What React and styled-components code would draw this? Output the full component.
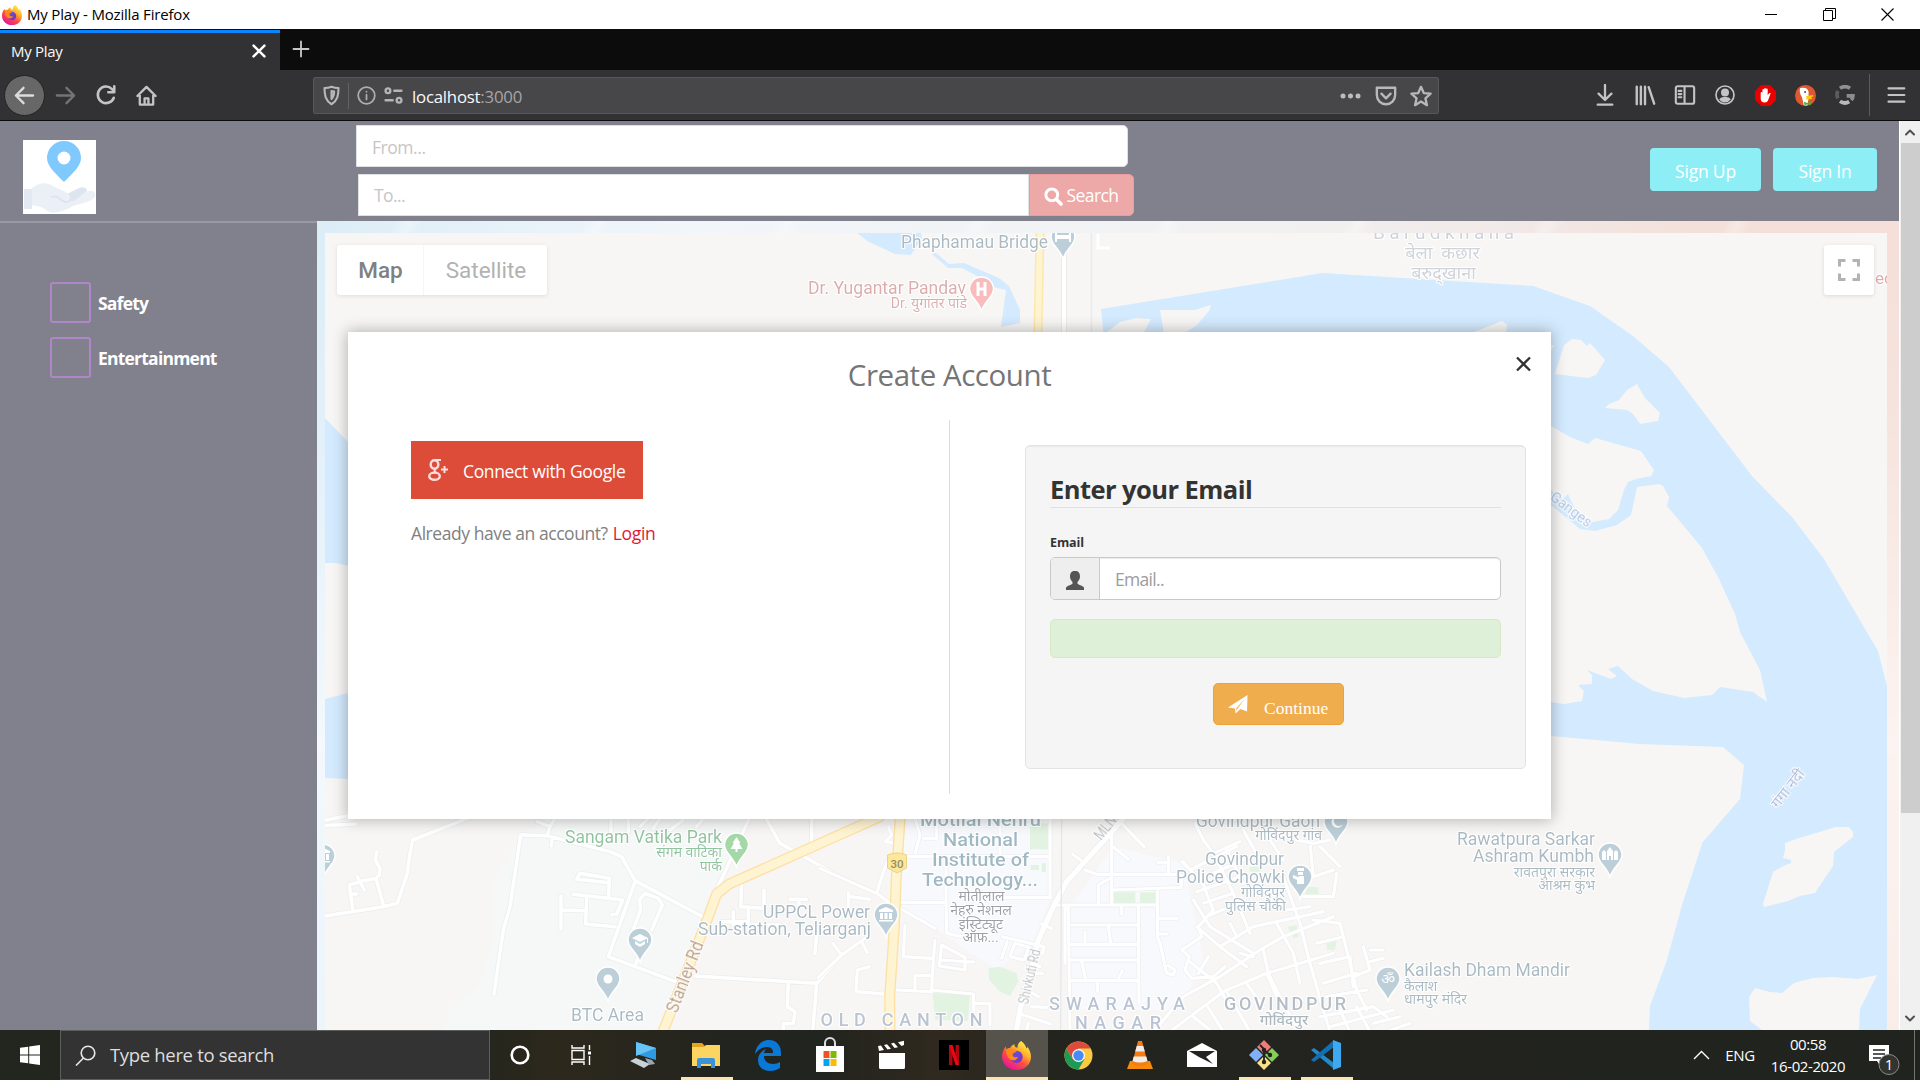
import React from "react";
import styled, { createGlobalStyle, css } from "styled-components";

const UI = `"Open Sans", "Noto Sans", sans-serif`;

const GlobalStyle = createGlobalStyle`
  *, *::before, *::after { box-sizing: border-box; }
  body { margin: 0; background: #fff; overflow: hidden; }
  button, input { font: inherit; margin: 0; }
  svg { display: block; flex: none; }
`;

const Desktop = styled.div`
  width: 1920px;
  height: 1080px;
  display: flex;
  flex-direction: column;
  font-family: ${UI};
  overflow: hidden;
`;

const Label = styled.span`
  font-size: ${(p) => p.$size || 15}px;
  letter-spacing: ${(p) => p.$track || 0}px;
  font-weight: ${(p) => p.$weight || 400};
  color: ${(p) => p.$color || "inherit"};
  line-height: 1;
  white-space: pre;
`;

/* ---------- window chrome ---------- */

const TitleBar = styled.header`
  height: 29px;
  flex: none;
  background: #fff;
  color: #000;
  display: flex;
  align-items: center;
  padding-left: 2px;
  gap: 5px;
`;

const WindowControls = styled.div`
  margin-left: auto;
  margin-right: 3px;
  display: flex;
  height: 100%;
`;

const WindowControl = styled.span`
  width: 58.5px;
  display: flex;
  align-items: center;
  justify-content: center;
`;

const TabStrip = styled.div`
  height: 41px;
  flex: none;
  background: #0c0c0d;
  display: flex;
  padding-top: 1px;
`;

const Tab = styled.div`
  width: 280px;
  border-top: 3px solid #0a84ff;
  background: #323234;
  color: #f9f9fa;
  display: flex;
  align-items: center;
  justify-content: space-between;
  padding: 0 14px 1px 11px;
`;

const NewTab = styled.div`
  width: 42px;
  display: flex;
  align-items: center;
  justify-content: center;
  padding-bottom: 2px;
`;

const Toolbar = styled.div`
  height: 51px;
  flex: none;
  background: #323234;
  border-bottom: 1px solid #0c0c0d;
  display: flex;
  align-items: center;
`;

const NavButtons = styled.div`
  width: 313px;
  display: flex;
  align-items: center;
  padding-left: 4px;
`;

const ToolSlot = styled.span`
  width: ${(p) => p.$w || 40}px;
  display: flex;
  justify-content: center;
  align-items: center;
`;

const BackButton = styled(ToolSlot)`
  height: 41px;
  width: 41px;
  border-radius: 50%;
  background: #676768;
  border: 1px solid #232324;
`;

const UrlBar = styled.div`
  width: 1126px;
  height: 37px;
  margin-top: 1px;
  background: #474749;
  border: 1px solid #58585a;
  border-radius: 2px;
  display: flex;
  align-items: center;
`;

const UrlDivider = styled.span`
  width: 1px;
  height: 26px;
  background: #626264;
`;

const UrlText = styled.div`
  flex: 1;
  padding: 2px 0 0 10px;
  color: #f9f9fa;
`;

const ToolbarEnd = styled.div`
  margin-left: auto;
  display: flex;
  align-items: center;
`;

const ToolbarDivider = styled.span`
  width: 1px;
  height: 42px;
  margin: 0 2px 0 4px;
  background: #5b5b5d;
`;

/* ---------- page ---------- */

const Viewport = styled.main`
  height: 909px;
  flex: none;
  display: flex;
  position: relative;
`;

const Page = styled.div`
  width: 1899px;
  display: flex;
  flex-direction: column;
`;

const SiteHeader = styled.div`
  height: 100px;
  flex: none;
  background: #81808d;
  display: flex;
  align-items: flex-start;
  padding: 4px 22px 0 23px;
`;

const LogoTile = styled.div`
  margin-top: 15px;
  width: 73px;
  height: 74px;
  background: #fff;
`;

const SearchStack = styled.div`
  margin-left: 260px;
  display: flex;
  flex-direction: column;
  gap: 7px;
`;

const field = css`
  height: 42px;
  border: 1px solid #dfe0e4;
  background: #fff;
  color: #c6c6c6;
  display: flex;
  align-items: center;
`;

const FromField = styled.div`
  ${field}
  width: 772px;
  padding-left: 15px;
  padding-top: 4px;
  border-radius: 0 5px 5px 0;
`;

const ToRow = styled.div`
  display: flex;
  padding-left: 2px;
`;

const ToField = styled.div`
  ${field}
  width: 671px;
  padding-left: 15px;
  padding-top: 2px;
`;

const SearchButton = styled.button`
  width: 105px;
  height: 42px;
  border: 1px solid #eb9c9c;
  border-radius: 0 5px 5px 0;
  background: #eda8a8;
  color: #fff;
  display: flex;
  align-items: center;
  justify-content: center;
  gap: 4px;
  padding: 2px 1px 0 0;
`;

const AuthButtons = styled.div`
  margin-left: auto;
  margin-top: 23px;
  display: flex;
  gap: 12px;
`;

const AuthButton = styled.button`
  width: ${(p) => p.$w}px;
  height: 43px;
  border: 0;
  border-radius: 4px;
  background: #8eeef6;
  color: #fff;
  padding: 4px 0 0;
`;

const Body = styled.div`
  flex: 1;
  display: flex;
  min-height: 0;
`;

const Sidebar = styled.aside`
  width: 317px;
  background: #81808d;
  border-top: 2px solid #9a98a7;
  padding: 59px 0 0 50px;
  display: flex;
  flex-direction: column;
  gap: 14px;
`;

const CheckRow = styled.label`
  display: flex;
  align-items: center;
  gap: 7px;
  color: #fff;
`;

const CheckBox = styled.span`
  width: 41px;
  height: 41px;
  border: 2px solid #b186c9;
  border-radius: 3px;
`;

const CheckText = styled(Label)`
  padding-top: 2px;
`;

const MapFrame = styled.section`
  flex: 1;
  padding: 12px 12px 0 8px;
  background:
    linear-gradient(115deg, rgba(255,255,255,0) 40%, rgba(255,255,255,.3) 47%, rgba(255,255,255,0) 55%) 0 0 / 190px 12px repeat-x,
    linear-gradient(180deg, rgba(255,255,255,0) 0, rgba(255,255,255,.15) 200px, rgba(255,255,255,.65) 520px, rgba(255,255,255,.45) 100%),
    linear-gradient(90deg, #dcedf7 0, #f1f6fa 24%, #f1f1f2 60%, #f1e9e7 76%, #f4dfd9 88%, #f5dfd8 100%);
  display: flex;
`;

const MapCanvas = styled.div`
  flex: 1;
  position: relative;
  overflow: hidden;
  background: #f7f6f5;
`;

const MapTypeControl = styled.div`
  position: absolute;
  left: 12px;
  top: 12px;
  height: 50px;
  width: 210px;
  display: flex;
  background: #fff;
  border-radius: 3px;
  box-shadow: 0 1px 4px rgba(0, 0, 0, 0.1);
  font-family: Roboto, sans-serif;
`;

const MapType = styled.div`
  width: ${(p) => p.$w}px;
  display: flex;
  align-items: center;
  justify-content: center;
  padding-left: 1px;
  & + & { border-left: 1px solid #f5f5f5; }
`;

const FullscreenControl = styled.div`
  position: absolute;
  right: 13px;
  top: 12px;
  width: 50px;
  height: 50px;
  background: #fff;
  border-radius: 3px;
  box-shadow: 0 1px 4px rgba(0, 0, 0, 0.12);
  display: flex;
  align-items: center;
  justify-content: center;
`;

const MapText = styled.text`
  filter: url(#labelHalo);
  white-space: pre;
`;

const Scrollbar = styled.div`
  width: 21px;
  background: #f0f0f0;
  border-left: 1px solid #fff;
  display: flex;
  flex-direction: column;
  align-items: center;
`;

const ScrollArrow = styled.div`
  height: 22px;
  display: flex;
  align-items: center;
`;

const ScrollThumb = styled.div`
  width: 19px;
  height: 670px;
  margin-bottom: auto;
  background: #cdcdcd;
`;

/* ---------- modal ---------- */

const Modal = styled.div`
  position: absolute;
  left: 348px;
  top: 211px;
  width: 1203px;
  height: 487px;
  background: #fff;
  box-shadow: 0 0 14px 1px rgba(0, 0, 0, 0.28);
  display: flex;
  flex-direction: column;
  padding: 24px 25px 25px 0;
`;

const ModalHeader = styled.div`
  display: grid;
  grid-template-columns: 1fr auto 1fr;
  align-items: start;
  height: 64px;
  padding-left: 25px;
`;

const ModalTitle = styled.h2`
  grid-column: 2;
  margin: 4px 0 0;
  display: flex;
`;

const CloseButton = styled.span`
  justify-self: end;
  margin-right: -5px;
`;

const ModalBody = styled.div`
  flex: 1;
  display: flex;
`;

const SocialColumn = styled.div`
  width: 602px;
  border-right: 1px solid #dcdcdc;
  padding: 21px 0 0 63px;
  display: flex;
  flex-direction: column;
  align-items: flex-start;
`;

const GoogleButton = styled.button`
  width: 232px;
  height: 58px;
  border: 0;
  background: #dd4b39;
  color: #fff;
  display: flex;
  align-items: center;
  gap: 15px;
  padding: 0 0 0 17px;
`;

const GoogleText = styled(Label)`
  padding-top: 4px;
`;

const LoginLine = styled.p`
  margin: 26px 0 0;
  display: flex;
  gap: 5px;
`;

const FormWell = styled.form`
  margin: 25px 0 25px 75px;
  width: 501px;
  border: 1px solid #e3e3e3;
  border-radius: 5px;
  background: #f5f5f5;
  box-shadow: inset 0 1px 1px rgba(0, 0, 0, 0.05);
  padding: 29px 24px 0;
  display: flex;
  flex-direction: column;
`;

const Legend = styled.div`
  height: 33px;
  border-bottom: 1px solid #e0e0e0;
  display: flex;
  align-items: center;
  color: #333;
  padding-bottom: 2px;
`;

const FieldLabel = styled.label`
  margin-top: 27px;
  height: 22px;
  color: #333;
  display: flex;
  align-items: center;
  padding-bottom: 6px;
`;

const InputGroup = styled.div`
  height: 43px;
  border: 1px solid #c9c9c9;
  border-radius: 5px;
  background: #fff;
  display: flex;
  overflow: hidden;
  box-shadow: inset 0 1px 1px rgba(0, 0, 0, 0.075);
`;

const Addon = styled.span`
  width: 49px;
  border-right: 1px solid #c9c9c9;
  background: #eee;
  display: flex;
  align-items: center;
  justify-content: center;
  padding-top: 3px;
`;

const InputText = styled.span`
  padding-left: 15px;
  padding-top: 3px;
  display: flex;
  align-items: center;
  color: #9c9c9c;
`;

const Alert = styled.div`
  margin-top: 19px;
  height: 39px;
  border: 1px solid #d6e9c6;
  border-radius: 5px;
  background: #dff0d8;
`;

const ContinueButton = styled.button`
  margin: 25px 0 0 163px;
  width: 131px;
  height: 42px;
  border: 1px solid #eea236;
  border-radius: 5px;
  background: #f0ad4e;
  color: #fff;
  font-family: "Liberation Serif", serif;
  display: flex;
  align-items: center;
  padding: 0 0 0 14px;
  gap: 16px;
`;

const ContinueText = styled(Label)`
  padding-top: 10px;
`;

/* ---------- taskbar ---------- */

const Taskbar = styled.footer`
  height: 50px;
  flex: none;
  display: flex;
  background: linear-gradient(90deg, #23261f 0, #24261e 25%, #2d281c 29%, #22241f 38%, #22241f 43%, #30291e 49%, #23241e 55%, #21231e 100%);
  color: #fff;
`;

const StartButton = styled.div`
  width: 60px;
  display: flex;
  align-items: center;
  justify-content: center;
`;

const TaskSearch = styled.div`
  width: 430px;
  height: 50px;
  border: 1px solid #5d5d5d;
  background: #333;
  color: #dedede;
  display: flex;
  align-items: center;
  padding-left: 14px;
  gap: 14px;
`;

const TaskItem = styled.div`
  width: 62px;
  padding-right: 2px;
  display: flex;
  align-items: center;
  justify-content: center;
  background: ${(p) => (p.$active ? "#56524c" : "transparent")};
  box-shadow: ${(p) => (p.$active ? "inset 0 -3px #fce4ac" : "none")};
`;

const RunningItem = styled(TaskItem)`
  width: 52px;
  margin: 0 5px;
  box-shadow: inset 0 -3px #fce4ac;
`;

const Tray = styled.div`
  margin-left: auto;
  display: flex;
  align-items: center;
`;

const Clock = styled.div`
  width: 76px;
  margin: 0 23px 0 0;
  display: flex;
  flex-direction: column;
  align-items: center;
  gap: 7px;
`;

const ShowDesktop = styled.div`
  width: 6px;
  height: 50px;
  border-left: 1px solid #75766f;
`;

/* ---------- drawings ---------- */

const FirefoxLogo = ({ size, id }) => (
  <svg width={size} height={size} viewBox="0 0 32 32">
    <defs>
      <linearGradient id={`${id}a`} x1=".85" y1=".05" x2=".25" y2=".95">
        <stop offset="0" stopColor="#fff44f" />
        <stop offset=".35" stopColor="#ffb12c" />
        <stop offset=".62" stopColor="#ff4f3f" />
        <stop offset="1" stopColor="#e8159a" />
      </linearGradient>
      <linearGradient id={`${id}b`} x1="0" y1="0" x2="1" y2="1">
        <stop offset="0" stopColor="#5f5be0" />
        <stop offset="1" stopColor="#7e2bc4" />
      </linearGradient>
    </defs>
    <path fill={`url(#${id}a)`} d="M21 0c3 2 5 5 6 8 1 0 1-1 1-2 2 3 4 7 4 11 0 9-7 15-16 15S0 25.500 0 17c0-4 1.500-8 4-11l1 3c1-1 2-1.300 4-1.400C10 5.500 12 4.300 14 3.600 13.500 5 14 6 15 7l2 .4C17 4 18.500 1.500 21 0z" />
    <circle cx="16" cy="17.500" r="6.800" fill={`url(#${id}b)`} />
    <path fill="#ff8a16" d="M5 9c3-1 6-.5 8 1l3 .5c0 1.500-1 2.200-3 2.800-1 .4-1.500 1.700-1.200 2.700.7 2 3 2.500 6 1.500-1 3-4 4.500-7 3.500C6 19.500 4 14 5 9z" />
  </svg>
);

const Line = ({ w = 24, h, d, color = "#c4c4c5", sw = 2.400, box = "0 0 24 24", fill = "none" }) => (
  <svg width={w} height={h || w} viewBox={box} fill={fill} stroke={color} strokeWidth={sw} strokeLinecap="round" strokeLinejoin="round">
    <path d={d} />
  </svg>
);

const LogoArt = () => (
  <svg width="73" height="74" viewBox="0 0 73 74">
    <path fill="#7fc9ff" fillRule="evenodd" d="M41 1a17 17 0 0 1 17 17c0 8-8 15-17 24-9-9-17-16-17-24A17 17 0 0 1 41 1zm0 10.500a6.500 6.500 0 1 0 0 13 6.500 6.500 0 0 0 0-13z" />
    <path fill="#e3e9f2" d="M1 49h8v20H1z" />
    <path fill="#dfe5ef" d="M42 55l14-7c4-2 8 0 8 3l-12 10-10 2z" />
    <path fill="#ebf0f7" d="M9 48c5-4 12-6 17-4l10 5c5 2 10 4 11 8 0 3-2 5-4 6l8-2 12-9c4-2 8-2 9 2 1 4-3 6-8 8L50 66c-8 5-18 8-24 6l-8-5-9-2z" />
    <path fill="none" stroke="#dfe5ee" strokeWidth="2" strokeLinecap="round" d="M29 57c3-1 6 0 8 2 3 3 6 4 9 2" />
  </svg>
);

const roadsWest = [
  "M10 32L90 16", "M10 47L108 42",
  "M10 319L190 290L232 280L262 190L270 130L278 90L455 20",
  "M98 298L88 225L130 212L168 205L190 285", "M112 200L133 240", "M90 252H110",
  "M170 126L166 150L180 175L178 195L165 208",
  "M522 552L550 360L570 290L602 74L685 78L870 125L905 140L945 212L1155 324",
  "M652 35L690 50L705 25", "M690 50L682 75", "M697 80L694 108",
  "M770 208L780 190L868 205L866 262", "M770 208L866 218", "M760 253L908 270L890 312L875 314",
  "M800 265L797 342L885 350", "M725 300L797 302", "M723 258V358",
  "M945 215L865 440L1075 518", "M945 470L962 420",
  "M995 360L1027 285L1015 265L975 250L958 270L962 300L935 370",
  "M1190 240L1290 20", "M1335 20L1380 100L1535 187",
  "M1265 215L1262 290L1330 295", "M1285 290V335H1205", "M1240 305V345H1380", "M1332 240V290",
  "M1410 268H1460", "M1437 275V292", "M1125 498L1490 520L1535 470",
  "M1405 520L1402 590L1425 605L1420 640L1390 642V665", "M1490 520L1478 665",
  "M1475 20V95", "M1485 430L1490 370", "M873 20V70", "M925 20V65", "M960 50L985 25", "M1000 55L1020 25", "M1050 60L1090 30", "M1130 50L1150 25",
];

const roadsEast = [
  "M205 50L215 75L197 95L215 98", "M0 175L170 250L205 275L345 355", "M170 250L192 180L205 150", "M85 248V292", "M90 260L150 268",
  "M240 277L378 278L380 370L470 388", "M262 140H690", "M378 140V278", "M285 25L300 75L286 130", "M350 30V85H310", "M545 262H692", "M540 25V140",
  "M255 345L250 440L335 445", "M345 390L340 450L335 540", "M335 540L460 552L462 602", "M462 580H510V645",
  "M365 405L435 442L435 480L358 468Z", "M360 450L462 456", "M230 540L335 545", "M285 540V497H335",
  "M148 470L112 480L108 545L205 553", "M65 435L-5 502", "M65 435L38 400", "M65 435L145 378", "M125 395L142 428",
  "M690 25V262", "M745 285L750 665", "M735 285V460", "M700 285H1012", "M1012 245V380L1020 400L1040 490L1060 495L1065 480L1045 467",
  "M875 70V285", "M905 40L972 110", "M880 112L925 148", "M757 132L782 150", "M795 180L830 193H1080",
  "M835 278V225L870 205", "M880 240L1085 232V195", "M1045 140V195", "M1015 158H1045",
  "M755 345H955", "M755 403H955", "M755 450H955", "M755 512H955", "M865 345L872 400", "M795 365V400",
  "M785 455L797 510", "M907 482L893 512", "M833 512V545", "M955 285L957 580",
  "M1012 325H1072", "M1015 372H1042", "M905 290V312",
  "M548 380L672 410L668 430", "M545 445L562 395", "M570 438L585 400L627 412L612 450L572 440Z", "M665 342L695 355",
  "M600 612L692 642", "M635 590L680 592", "M630 545L655 560", "M620 660L625 640", "M640 490H668", "M640 460L660 470",
  "M1090 155L1150 225L1180 300L1135 350L1145 380L1085 420L1108 440L1095 480L1115 505L1180 500",
  "M1085 155L1110 180L1250 110", "M1120 215L1270 150", "M1130 245L1260 200", "M1150 280L1240 250", "M1160 320L1230 290", "M1120 270L1170 350L1300 430",
  "M1180 130L1240 250L1290 370", "M1220 120L1270 220", "M1150 90L1180 130L1260 95", "M1125 40L1150 90", "M1270 60L1320 150", "M1330 60L1390 150",
  "M1000 665L1090 560L1200 500L1320 420L1390 380L1540 320", "M1250 380L1300 350L1510 305", "M1230 340L1250 380L1200 410L1280 470", "M1200 410L1130 350",
  "M1110 455L1190 520L1230 590", "M1135 490L1165 440", "M1180 500L1215 470", "M1260 430L1300 440",
  "M1050 665L1210 545L1340 490L1540 430", "M1160 585L1210 665", "M1120 620L1170 660", "M1220 545L1290 665", "M1280 520L1330 590", "M1340 490L1370 560",
  "M1330 420L1345 490L1400 600L1440 665", "M1390 200L1440 340L1470 460L1510 600L1530 665", "M1440 260H1540L1550 190", "M1370 340L1420 430L1440 520", "M1400 300L1470 290",
  "M1480 330L1560 340L1590 460L1610 540L1640 600", "M1490 400L1570 380", "M1500 460L1590 440L1600 530", "M1630 410L1650 480L1600 500", "M1650 420H1690", "M1650 455L1690 445",
  "M1510 520L1610 490", "M1520 560L1640 540", "M1500 620L1660 590L1700 620", "M1530 650L1720 600", "M1560 600L1590 665", "M1610 590L1650 665", "M1660 640L1740 620", "M1700 665L1770 640",
  "M1470 100L1480 200L1540 180", "M1500 110L1560 170", "M1430 90L1480 100L1530 90",
];

const greens = [
  "M630 40H690V118H630Z", "M632 165H657V180H632Z", "M665 160H678V186H665Z", "M882 247H946V280H882Z", "M960 247H1010V280H960Z",
  "M505 475L540 470L590 490L595 515L570 558L540 545L508 510Z", "M338 550L450 553L444 632L345 630Z",
  "M1290 170H1320V185H1290Z", "M1460 230L1495 232V252H1455Z", "M1402 350L1430 345L1436 380L1420 385Z", "M1520 400L1550 392L1545 420H1520Z",
];

const MapLabel = ({ x, y, w, size = 18, fill = "#a9bac4", weight = 400, rotate, children }) => (
  <MapText
    x={x}
    y={y}
    fontSize={size}
    fill={fill}
    fontWeight={weight}
    textLength={w}
    lengthAdjust="spacingAndGlyphs"
    transform={rotate ? `rotate(${rotate} ${x} ${y})` : undefined}
  >
    {children}
  </MapText>
);

/* Devanagari keeps its natural advance so that the vowel signs stay attached. */
const anchors = { start: 0, middle: 0.5, end: 1 };
const HindiLabel = ({ x, y, w, size = 14, fill = "#a9bac4", weight = 400, rotate, align = "end", children }) => (
  <MapText
    x={x + w * anchors[align]}
    y={y}
    fontSize={size}
    fill={fill}
    fontWeight={weight}
    textAnchor={align}
    transform={rotate ? `rotate(${rotate} ${x} ${y})` : undefined}
  >
    {children}
  </MapText>
);

const AreaLabel = ({ x, y, w, fill = "#b9c3d2", children }) => (
  <MapText x={x} y={y} fontSize="18" fill={fill} fontWeight="500" textLength={w} lengthAdjust="spacing">
    {children}
  </MapText>
);

const Pin = ({ x, y, color = "#bccfd9", children }) => (
  <g transform={`translate(${x} ${y})`}>
    <path d="M0-12a12 12 0 0 1 12 12c0 8-9 12-12 22C-3 12-12 8-12 0A12 12 0 0 1 0-12z" fill={color} stroke="#fff" strokeWidth="1.500" />
    <g fill="#fff" stroke="none">{children}</g>
  </g>
);

const Columns = () => <path d="M-7-5L0-8L7-5V-3H-7zM-6-2h3v6h-3zM-1.500-2h3v6h-3zM3-2h3v6H3zM-7 5H7V6.500H-7z" />;

const MapArt = () => {
  const water = "#d4eafe";
  const land = "#f7f6f5";
  const third = "scale(.33333)";
  return (
    <svg width="1562" height="797" viewBox="325 233 1562 797" fontFamily={`Roboto, "Noto Sans", "Noto Sans Devanagari", sans-serif`}>
      <defs>
        <filter id="labelHalo" x="-10%" y="-30%" width="120%" height="160%">
          <feMorphology in="SourceAlpha" operator="dilate" radius="1" result="fat" />
          <feGaussianBlur in="fat" stdDeviation=".5" result="soft" />
          <feFlood floodColor="#fff" floodOpacity=".95" />
          <feComposite in2="soft" operator="in" result="halo" />
          <feMerge><feMergeNode in="halo" /><feMergeNode in="SourceGraphic" /></feMerge>
        </filter>
      </defs>
      <path fill={land} d="M325 233h1562v797H325z" />
      <g fill={water}>
        <path d="M1101 309L1280 280L1322 273L1533 286L1590 306L1633 336L1669 367L1752 476L1792 517L1824 559L1878 651L1887 686V1030H1649L1650 1006L1667 960L1682 905L1700 850L1702 843L1740 799L1744 765L1723 747L1640 744L1551 736L1400 725V340L1104 338Z" />
        <path d="M325 418L348 442V566L336 563H325ZM325 699L348 693V779L325 778Z" />
        <path d="M857 233L869 242L895 254L911 255L922 238L921 233Z" />
        <path d="M936 253L949 264L964 263L999 278L1009 286L1020 310V323L1001 327L1006 290L993 287L979 277L962 268H948L932 254Z" />
      </g>
      <g fill={land}>
        <path d="M1400 420L1551 426L1570 437L1588 444L1595 438L1641 451L1654 470L1651 476L1636 479L1628 482L1624 490L1618 510L1609 519L1593 522L1577 513L1568 494L1563 499L1551 490H1400Z" />
        <path d="M1400 505H1551L1580 529L1595 531L1617 525L1631 515L1637 487L1659 484L1663 486L1669 497L1667 506L1683 525L1702 548L1718 577L1735 614L1740 632L1760 670L1767 702L1753 692L1720 687L1712 695L1684 698L1653 691L1632 679L1618 666L1608 669L1617 676L1611 679L1587 670L1592 675V684L1578 685L1584 691L1582 701L1564 704L1551 702H1400Z" />
        <path d="M1555 374L1564 345L1572 339L1581 340L1587 346L1590 343L1605 360L1596 375L1588 378ZM1605 408L1609 404L1619 400L1627 390L1637 384L1645 398L1660 413L1658 421L1640 424L1633 414L1627 410Z" />
        <path d="M1785 843L1796 839L1836 827H1849L1853 832V837L1834 852L1833 866L1815 893L1800 896L1788 901L1764 907L1763 904L1773 872L1783 866L1791 863V860L1783 858L1785 850ZM1755 988L1770 992L1782 993L1794 983L1813 978L1833 977L1858 979L1877 975L1860 1009L1859 1030H1762L1750 1021L1749 997Z" />
        <path d="M1107 332L1120 322L1136 318L1151 319L1143 334ZM1160 310H1195L1211 305L1209 311L1197 325L1183 334H1164ZM1474 332L1502 321L1507 325L1506 334ZM1548 345L1554 345L1549 355Z" />
      </g>

      <g fill="none">
        <path d="M1040 233L1038 333" stroke="#fde7ae" strokeWidth="9" />
        <path d="M1040 233L1038 333" stroke="#fff4d0" strokeWidth="6" />
        <path d="M1064 250V333" stroke="#ececee" strokeWidth="6" />
        <path d="M1064 250V333" stroke="#fff" strokeWidth="4" />
        <path d="M1091.500 233V333" stroke="#ebebec" strokeWidth="1.500" />
      </g>

      <g transform={`translate(320 810) ${third}`}>
        <path fill="#f5f8f7" d="M600 75L520 220L515 400L480 520L390 600L375 665H1020L1155 324L1200 240L1290 20H700Z" />
        <g fill="none" strokeLinecap="round" strokeLinejoin="round">
          <path d={roadsWest.join("")} stroke="#ecedef" strokeWidth="15" />
          <path d={roadsWest.join("")} stroke="#fff" strokeWidth="10.500" />
          <path d="M1025 675L1165 320L1190 252L1228 222L1535 85L1680 20" stroke="#fde0a4" strokeWidth="33" />
          <path d="M1025 675L1165 320L1190 252L1228 222L1535 85L1680 20" stroke="#fef4d2" strokeWidth="25" />
        </g>
      </g>

      <g transform={`translate(820 810) ${third}`}>
        <path fill="#f8f9fc" d="M245 20H692V262L640 400L530 480L380 380L245 290ZM750 290V600H1080L1150 450L1090 160L880 110Z" />
        <path fill="#e2f3e2" d={greens.join("")} />
        <g fill="none" strokeLinecap="round" strokeLinejoin="round">
          <path d={roadsEast.join("")} stroke="#ebecef" strokeWidth="13" />
          <path d="M915 20L880 60L740 215L700 290L655 390L640 450L600 600L588 670" stroke="#ebecef" strokeWidth="20" />
          <path d={roadsEast.join("")} stroke="#fff" strokeWidth="9.500" />
          <path d="M915 20L880 60L740 215L700 290L655 390L640 450L600 600L588 670" stroke="#fff" strokeWidth="16" />
          <path d="M725 20L722 665" stroke="#e6e7ea" strokeWidth="4" />
          <path d="M241 15L229 200L223 350L209 560L210 675" stroke="#fde0a4" strokeWidth="33" />
          <path d="M241 15L229 200L223 350L209 560L210 675" stroke="#fef4d2" strokeWidth="25" />
        </g>
      </g>

      <MapLabel x={901} y={248} w={147}>Phaphamau Bridge</MapLabel>
      <Pin x={1063} y={237}><path d="M-8-5h2v3h12v-3h2V5H6V2H-6V5H-8z" /></Pin>
      <path d="M1098 234v14h12" fill="none" stroke="#fff" strokeWidth="3" />
      <MapLabel x={808} y={294} w={158} fill="#dcabab">Dr. Yugantar Pandav</MapLabel>
      <HindiLabel x={888} y={308} w={79} fill="#dcabab">Dr. युगांतर पांडे</HindiLabel>
      <Pin x={981.500} y={289} color="#f8bcbc"><path d="M-5-7h3v5.500h4V-7h3V7H2V1.500h-4V7h-3z" /></Pin>
      <MapText x={1373} y={239} fontSize="19" fill="#cfd3da" textLength="141" lengthAdjust="spacing">Barudkhana</MapText>
      <HindiLabel x={1400} y={259} w={85} size={18} fill="#cfd3da" align="middle">{"बेला\u00a0\u00a0कछार"}</HindiLabel>
      <HindiLabel x={1408} y={279} w={71} size={18} fill="#cfd3da" align="middle">बरुद्खाना</HindiLabel>
      <MapLabel x={1875} y={284} size={17} fill="#dcabab">ed</MapLabel>

      <Pin x={323} y={856}><Columns /></Pin>
      <MapLabel x={565} y={843} w={157} fill="#8fc49f">Sangam Vatika Park</MapLabel>
      <HindiLabel x={658} y={857} w={64} fill="#8fc49f">संगम वाटिका</HindiLabel>
      <HindiLabel x={700} y={871} w={22} fill="#8fc49f">पार्क</HindiLabel>
      <Pin x={736.500} y={845} color="#a5d8a7"><path d="M0-8L4-2H2.500L6 4H1V7H-1V4H-6L-2.500-2H-4z" /></Pin>
      <Pin x={640} y={940}><path d="M-8-2L0-6L8-2L0 2zM-5 1L0 4L5 1V4L0 7L-5 4zM7-2h1v5H7z" /></Pin>
      <Pin x={608} y={979}><circle r="4.500" /></Pin>
      <MapLabel x={571} y={1021} w={73}>BTC Area</MapLabel>
      <MapLabel x={763} y={918} w={107}>UPPCL Power</MapLabel>
      <MapLabel x={698} y={935} w={173}>Sub-station, Teliarganj</MapLabel>
      <Pin x={886} y={915}><Columns /></Pin>
      <MapLabel x={677} y={1014} w={75} fill="#b99a84" rotate={-69}>Stanley Rd</MapLabel>

      <path d="M887.500 855q9.500-4 19 0v13q-4 2-9.500 5-5-3-9.500-5z" fill="#fde79a" stroke="#e9d28c" />
      <text x="897" y="868" fontSize="11.500" textAnchor="middle" fill="#9a8d62" fontWeight="500">30</text>

      <g>
        <MapLabel x={920} y={826} w={121} size={19} weight={500} fill="#9fb9c4">Motilal Nehru</MapLabel>
        <MapLabel x={943} y={846} w={75} size={19} weight={500} fill="#9fb9c4">National</MapLabel>
        <MapLabel x={932} y={866} w={97} size={19} weight={500} fill="#9fb9c4">Institute of</MapLabel>
        <MapLabel x={922} y={886} w={116} size={19} weight={500} fill="#9fb9c4">Technology...</MapLabel>
        <HindiLabel x={959} y={901} w={45} align="middle" fill="#9c9fa3">मोतीलाल</HindiLabel>
        <HindiLabel x={951} y={915} w={60} align="middle" fill="#9c9fa3">नेहरु नेशनल</HindiLabel>
        <HindiLabel x={959} y={929} w={44} align="middle" fill="#9c9fa3">इंस्टिट्यूट</HindiLabel>
        <HindiLabel x={963} y={942} w={35} align="middle" fill="#9c9fa3">ऑफ़...</HindiLabel>
      </g>
      <MapLabel x={1101} y={841} w={34} size={14} fill="#bcbfc3" rotate={-51}>MLNR</MapLabel>
      <MapLabel x={1028} y={1005} w={56} size={14} fill="#bcbfc3" rotate={-77}>Shivkuti Rd</MapLabel>

      <MapLabel x={1196} y={827} w={124}>Govindpur Gaon</MapLabel>
      <HindiLabel x={1256} y={840} w={66}>गोविंदपुर गांव</HindiLabel>
      <Pin x={1336} y={822}><path d="M3-6a6 6 0 1 0 4 8a5 5 0 1 1-4-8z" /></Pin>
      <MapLabel x={1205} y={865} w={79}>Govindpur</MapLabel>
      <MapLabel x={1176} y={883} w={109}>Police Chowki</MapLabel>
      <HindiLabel x={1242} y={897} w={43}>गोविंदपुर</HindiLabel>
      <HindiLabel x={1226} y={911} w={60}>पुलिस चौकी</HindiLabel>
      <Pin x={1300} y={877}><path d="M-3-9h7v3h-7zM-2-5h5v3h-5zM-7-2l5 2 2-1h4v8h-7V3l-4-2z" /></Pin>

      <MapLabel x={1457} y={845} w={138}>Rawatpura Sarkar</MapLabel>
      <MapLabel x={1473} y={862} w={121}>Ashram Kumbh</MapLabel>
      <HindiLabel x={1515} y={877} w={80}>रावतपुरा सरकार</HindiLabel>
      <HindiLabel x={1540} y={890} w={55}>आश्रम कुंभ</HindiLabel>
      <Pin x={1610} y={855}><path d="M-8 5v-8l2-2 2 2v8zM-3 5v-9L0-8l3 4v9H1V1h-2v4zM4 5v-8l2-2 2 2v8z" /></Pin>
      <MapLabel x={1404} y={976} w={166}>Kailash Dham Mandir</MapLabel>
      <HindiLabel x={1404} y={991} w={33} align="start">कैलाश</HindiLabel>
      <HindiLabel x={1404} y={1004} w={62} align="start">धामपुर मंदिर</HindiLabel>
      <Pin x={1388} y={979}><text x="0" y="5" fontSize="15" textAnchor="middle">ॐ</text></Pin>

      <AreaLabel x={820.500} y={1026} w={162}>OLD CANTON</AreaLabel>
      <AreaLabel x={1049} y={1010} w={136}>SWARAJYA</AreaLabel>
      <AreaLabel x={1075} y={1029} w={86}>NAGAR</AreaLabel>
      <AreaLabel x={1224} y={1010} w={122} fill="#b3bdc7">GOVINDPUR</AreaLabel>
      <HindiLabel x={1258} y={1025} w={52} size={15} weight={500} align="middle" fill="#a9b6be">गोविंदपुर</HindiLabel>
      <MapLabel x={1549} y={499} w={48} size={15} fill="#a9c3e6" rotate={37}>Ganges</MapLabel>
      <HindiLabel x={1778} y={809} w={48} size={15} fill="#a9b7dc" rotate={-52} align="start">गंगा नदी</HindiLabel>
    </svg>
  );
};

const Checks = ["Safety", "Entertainment"];

const taskIcons = {
  cortana: (
    <svg width="22" height="22" viewBox="0 0 22 22"><circle cx="11" cy="11" r="8.300" fill="none" stroke="#fff" strokeWidth="2.600" /></svg>
  ),
  taskView: (
    <svg width="22" height="22" viewBox="0 0 22 22" fill="none" stroke="#fff" strokeWidth="1.400">
      <path d="M1 1v3h12V1M1 21v-3h12v3M1 6.500h12v9H1zM18.500 1v5M18.500 12v9" /><path d="M17 7.500h3v3h-3z" fill="#fff" stroke="none" />
    </svg>
  ),
  pc: (
    <svg width="32" height="32" viewBox="0 0 32 32">
      <path fill="#2f9ae4" d="M8 3l20 6v12L8 15z" /><path fill="#68c4f5" d="M8 3l20 6-20 8z" />
      <path fill="#c8d1d8" d="M2 22l6-3 14 6-6 4z" /><path fill="#9aa6ae" d="M17 19l7 2 3 4-6 1z" />
    </svg>
  ),
  explorer: (
    <svg width="30" height="30" viewBox="0 0 30 30">
      <path fill="#e3a51f" d="M1 3h10l3 3h1v4H1z" /><path fill="#fcd462" d="M1 7h12l2-2h14v21H1z" />
      <path fill="#3a92dd" d="M6 28v-8q0-2 2-2h14q2 0 2 2v8h-4v-4H10v4z" />
    </svg>
  ),
  edge: (
    <svg width="30" height="32" viewBox="0 0 30 32">
      <path fill="#0a78d6" d="M2 15C3 6 9 1 16 1c8 0 12 6 12 13v3H11c0 5 4 8 9 8 3 0 5-.7 7-2v6c-3 2-6 3-10 3C9 32 5 27 5 21c0-5 3-9 8-11-1 1-2 3-2 4h9c0-4-2-6-6-6-5 0-9 3-12 7z" />
    </svg>
  ),
  store: (
    <svg width="30" height="36" viewBox="0 0 30 36">
      <path d="M10 9V6a5 5 0 0 1 10 0v3" fill="none" stroke="#ddd" strokeWidth="2" /><path fill="#fff" d="M1 9h28v26H1z" />
      <path fill="#f25022" d="M8.500 14h6v7h-6z" /><path fill="#7fba00" d="M15.500 14h6v7h-6z" /><path fill="#00a4ef" d="M8.500 22h6v7h-6z" /><path fill="#ffb900" d="M15.500 22h6v7h-6z" />
    </svg>
  ),
  movies: (
    <svg width="28" height="30" viewBox="0 0 28 30" fill="#fff">
      <path d="M1 13h26v14.500q0 1.500-1.500 1.500h-23Q1 29 1 27.500zM0 6l3-.5L6 10 1 11zM6 5l3-.7 4 4.500-3.500.7zM13 3.500l3-.7 4 4.500-3.500.7zM20 2.200l6-1.500V5l-2.500 1z" />
    </svg>
  ),
  netflix: (
    <svg width="30" height="30" viewBox="0 0 30 30">
      <path d="M0 0h30v30H0z" /><path fill="#b1060f" d="M10 5h3.500v20H10zM16.500 5H20v20h-3.500z" /><path fill="#e50914" d="M10 5h3.500L20 25h-3.500z" />
    </svg>
  ),
  firefox: <FirefoxLogo size={29} id="ffTask" />,
  chrome: (
    <svg width="29" height="29" viewBox="-14.500 -14.500 29 29">
      <circle r="14" fill="#fcca3f" /><path fill="#dd4b3e" d="M-12.100-7A14 14 0 0 1 12.100-7H0L-6 3.500z" />
      <path fill="#1e9a57" d="M-12.100-7A14 14 0 0 0 0 14L6 3.500-6 3.500z" /><circle r="6.500" fill="#fff" /><circle r="5.200" fill="#4a8af4" />
    </svg>
  ),
  vlc: (
    <svg width="26" height="30" viewBox="0 0 26 30">
      <path fill="#f58a0b" d="M3 21h20l3 8H0z" /><path fill="#f47c10" d="M11 1h4l6 23q-8 4-16 0z" />
      <path fill="#eee" d="M9.800 6h6.400l1.600 5.500H8.200zM6.700 16.500h12.600l1.200 4.500q-7.500 3-15 0z" />
    </svg>
  ),
  mail: (
    <svg width="30" height="26" viewBox="0 0 30 26">
      <path fill="#fff" d="M0 9L15 1l15 8v16H0z" /><path fill="#22241f" d="M2 9h26l-9 6 7 7L12 15z" />
    </svg>
  ),
  git: (
    <svg width="32" height="32" viewBox="0 0 32 32">
      <path fill="#f17b7b" d="M16 1l7 7-7 7-7-7z" /><path fill="#7fb0f8" d="M8 9l7 7-7 7-7-7z" /><path fill="#85cd5a" d="M24 9l7 7-7 7-7-7z" /><path fill="#fbe08a" d="M16 17l7 7-7 7-7-7z" />
      <path d="M12 6l4 4v14M16 11l6 5" fill="none" stroke="#20221d" strokeWidth="1.800" /><g fill="#20221d"><circle cx="16" cy="11" r="2.200" /><circle cx="16" cy="23" r="2.200" /><circle cx="22" cy="16" r="2.200" /></g>
    </svg>
  ),
  code: (
    <svg width="32" height="32" viewBox="0 0 32 32">
      <path fill="#2489ca" d="M1 11l3-2 20 15v6z" /><path fill="#1070b3" d="M1 21l3 2L24 8V1z" /><path fill="#3ea9f0" d="M23 1l8 3v24l-8 3z" />
      <path fill="#22241f" d="M23 10v12l-8-6z" />
    </svg>
  ),
};

const running = { explorer: true, git: true, code: true };

export default function App() {
  return (
    <Desktop>
      <GlobalStyle />
      <TitleBar>
        <FirefoxLogo size={20} id="ffTitle" />
        <Label $size={15} $track={-0.18}>My Play - Mozilla Firefox</Label>
        <WindowControls>
          <WindowControl><svg width="12" height="12"><path d="M0 5.500h12" stroke="#000" /></svg></WindowControl>
          <WindowControl><svg width="13" height="13" fill="none" stroke="#000"><path d="M.5 2.500h9v10h-9zM2.500 2.500v-2h10v10h-3" /></svg></WindowControl>
          <WindowControl><svg width="13" height="13" stroke="#000" strokeWidth="1.100"><path d="M.5.5l12 12M12.500.5l-12 12" /></svg></WindowControl>
        </WindowControls>
      </TitleBar>
      <TabStrip>
        <Tab>
          <Label $size={15} $track={-0.3}>My Play</Label>
          <Line w={14} d="M5 5l14 14M19 5L5 19" color="#fff" sw={3.200} box="3 3 18 18" />
        </Tab>
        <NewTab><Line w={20} d="M12 3v18M3 12h18" color="#c8c8c9" sw={2.200} /></NewTab>
      </TabStrip>
      <Toolbar>
        <NavButtons>
          <BackButton><Line w={23} d="M21 12H3M11 4l-8 8 8 8" color="#dcdcdc" /></BackButton>
          <ToolSlot><Line w={23} d="M3 12h18M13 4l8 8-8 8" color="#747476" /></ToolSlot>
          <ToolSlot $w={42}><Line d="M20.500 15A9 9 0 1 1 18.500 5.500L21 8M21 2.500V9H14.500" sw={2.800} w={22} /></ToolSlot>
          <ToolSlot $w={38}><Line w={23} d="M2.500 12.500L12 3l9.500 9.500M5 11.500V21.500h14V11.500M10 21v-6h4v6" /></ToolSlot>
        </NavButtons>
        <UrlBar>
          <ToolSlot $w={34}><Line w={21} d="M12 2c3 1.200 5.500 1.500 8 1.500 0 8-1 14-8 18.500C5 17.500 4 11.500 4 3.500 6.500 3.500 9 3.200 12 2zM12 7v9c1.500-1.500 3-4 3-8.500z" sw={2.400} color="#b8b8b9" /></ToolSlot>
          <UrlDivider />
          <ToolSlot $w={35}><Line w={19} d="M12 1.500a10.500 10.500 0 1 0 0 21 10.500 10.500 0 0 0 0-21zM12 11v6M12 7v.2" color="#aeaeaf" sw={2.200} /></ToolSlot>
          <ToolSlot $w={18}><Line w={19} d="M5 3a3 3 0 1 0 0 6 3 3 0 0 0 0-6zM13 6h9M19 15a3 3 0 1 0 0 6 3 3 0 0 0 0-6zM2 18h9" color="#b5b5b6" sw={3} /></ToolSlot>
          <UrlText><Label $size={16.800} $track={-0.22}>localhost</Label><Label $size={16.800} $track={-0.22} $color="#a5a5a7">:3000</Label></UrlText>
          <ToolSlot $w={35}><svg width="21" height="6" fill="#bdbdbe"><circle cx="3" cy="3" r="2.500" /><circle cx="10.500" cy="3" r="2.500" /><circle cx="18" cy="3" r="2.500" /></svg></ToolSlot>
          <ToolSlot $w={35}><Line w={22} d="M2 3h20v8a10 10 0 0 1-20 0zM7 9.500l5 5 5-5" color="#b8b8b9" sw={2.600} /></ToolSlot>
          <ToolSlot $w={35}><Line w={22} d="M12 2l3 6.800 7.500.7-5.700 5 1.700 7.500L12 18l-6.500 4 1.700-7.500-5.700-5 7.500-.7z" color="#b8b8b9" sw={2.500} /></ToolSlot>
        </UrlBar>
        <ToolbarEnd>
          <ToolSlot><Line w={22} d="M12 1v16M5 10.500l7 7 7-7M4 22.500h16" sw={2.500} /></ToolSlot>
          <ToolSlot><Line w={22} d="M3 3v19M7.500 3v19M12 3v19M16 3.500l6 18" sw={2.600} /></ToolSlot>
          <ToolSlot><Line w={22} d="M4 2.500h16q2 0 2 2v15q0 2-2 2H4q-2 0-2-2v-15q0-2 2-2zM11.500 3v18M5 7.500h3M5 11h3M5 14.500h3" sw={2.300} /></ToolSlot>
          <ToolSlot>
            <svg width="20" height="20" viewBox="0 0 24 24"><circle cx="12" cy="12" r="10.800" fill="none" stroke="#c4c4c5" strokeWidth="2" /><circle cx="12" cy="9" r="4.800" fill="#c4c4c5" /><path fill="#c4c4c5" d="M5 17q3-3.500 7-2.500 4-1 7 2.500-3 4-7 4t-7-4z" /></svg>
          </ToolSlot>
          <ToolSlot>
            <svg width="21" height="21" viewBox="0 0 24 24"><path fill="#e60000" d="M7 0h10l7 7v10l-7 7H7l-7-7V7z" /><path fill="#fff" d="M6.500 9q0-1 1-1t1 1v3V5.500q0-1 1-1t1 1V11 4.500q0-1 1-1t1 1V11 5q0-1 1-1t1 1v7l1.500-2.500q1-1 2 0L15.500 16q-1 4-4.500 4-4.500 0-4.500-5z" /></svg>
          </ToolSlot>
          <ToolSlot>
            <svg width="21" height="21" viewBox="0 0 24 24"><circle cx="12" cy="12" r="12" fill="#de5833" /><path fill="#fff" d="M6 3.500q8-2 9.500 4v8l-1.500 8-4-.5L8 14Q4 8 6 3.500z" /><path fill="#fc0" d="M13 12.500l8-1q0 2-3 3l2 1.500-7 .5z" /><path fill="#4fae34" d="M10 19l4 1.500 4-1.500v4l-4-1-3 1z" /><circle cx="11.500" cy="8" r="1.100" fill="#2d4f8e" /></svg>
          </ToolSlot>
          <ToolSlot>
            <svg width="20" height="20" viewBox="0 0 24 24" fill="none" strokeWidth="4.500"><path stroke="#909092" d="M6 4a10 10 0 0 1 12 0" /><path stroke="#5c5c5e" d="M3.500 7a10 10 0 0 0 0 9" /><path stroke="#b8b8b8" d="M6 19.500a10 10 0 0 0 11 .5" /><path stroke="#8c8c8e" d="M19.500 18q2-2 2-5H14" /></svg>
          </ToolSlot>
          <ToolbarDivider />
          <ToolSlot $w={48}><Line w={20} d="M3 4h19M3 12h19M3 20h19" sw={2.600} /></ToolSlot>
        </ToolbarEnd>
      </Toolbar>

      <Viewport>
        <Page>
          <SiteHeader>
            <LogoTile><LogoArt /></LogoTile>
            <SearchStack>
              <FromField><Label $size={17.500} $track={-0.45}>From...</Label></FromField>
              <ToRow>
                <ToField><Label $size={17.500} $track={-0.6}>To...</Label></ToField>
                <SearchButton>
                  <svg width="19" height="19" viewBox="0 0 19 19" fill="none" stroke="#fff" strokeLinecap="round"><circle cx="7.800" cy="7.800" r="5.900" strokeWidth="3" /><path d="M12.500 12.500l4.500 4.500" strokeWidth="3.600" /></svg>
                  <Label $size={17.500} $track={-0.6}>Search</Label>
                </SearchButton>
              </ToRow>
            </SearchStack>
            <AuthButtons>
              <AuthButton $w={111}><Label $size={17.500} $track={-0.2}>Sign Up</Label></AuthButton>
              <AuthButton $w={104}><Label $size={17.500} $track={-0.2}>Sign In</Label></AuthButton>
            </AuthButtons>
          </SiteHeader>
          <Body>
            <Sidebar>
              {Checks.map((name) => (
                <CheckRow key={name}>
                  <CheckBox />
                  <CheckText $size={17.500} $weight={700} $track={-0.78}>{name}</CheckText>
                </CheckRow>
              ))}
            </Sidebar>
            <MapFrame>
              <MapCanvas>
                <MapArt />
                <MapTypeControl>
                  <MapType $w={86}><Label $size={22.500} $weight={500} $color="#808080">Map</Label></MapType>
                  <MapType $w={124}><Label $size={22.500} $color="#b2b2b2">Satellite</Label></MapType>
                </MapTypeControl>
                <FullscreenControl>
                  <svg width="22" height="22" fill="none" stroke="#b3b3b3" strokeWidth="3"><path d="M1.500 7.500v-6h6M14.500 1.500h6v6M20.500 14.500v6h-6M7.500 20.500h-6v-6" /></svg>
                </FullscreenControl>
              </MapCanvas>
            </MapFrame>
          </Body>
        </Page>
        <Scrollbar>
          <ScrollArrow><Line w={10} h={10} d="M1 7.500l4-4 4 4" box="0 0 10 10" color="#505050" sw={2} /></ScrollArrow>
          <ScrollThumb />
          <ScrollArrow><Line w={10} h={10} d="M1 2.500l4 4 4-4" box="0 0 10 10" color="#505050" sw={2} /></ScrollArrow>
        </Scrollbar>

        <Modal>
          <ModalHeader>
            <ModalTitle><Label $size={29.500} $track={-0.45} $color="#757575">Create Account</Label></ModalTitle>
            <CloseButton><svg width="15" height="16" stroke="#333" strokeWidth="2.300"><path d="M1 1.500l13 13M14 1.500l-13 13" /></svg></CloseButton>
          </ModalHeader>
          <ModalBody>
            <SocialColumn>
              <GoogleButton type="button">
                <svg width="20" height="22" viewBox="0 0 20 22" fill="none" stroke="#f9dedb" strokeWidth="2">
                  <ellipse cx="6.500" cy="5.500" rx="3.800" ry="4.300" strokeWidth="2.500" /><path d="M7 1h6M8 10q-3 2 0 3.500" /><ellipse cx="6.500" cy="17.200" rx="5.300" ry="3.600" strokeWidth="2.400" /><path d="M13 10.500h7M16.500 7v7" />
                </svg>
                <GoogleText $size={17.500} $track={-0.35}>Connect with Google</GoogleText>
              </GoogleButton>
              <LoginLine>
                <Label $size={17.500} $track={-0.43} $color="#808080">Already have an account?</Label>
                <Label $size={17.500} $track={-0.3} $color="#dc1a37">Login</Label>
              </LoginLine>
            </SocialColumn>
            <FormWell>
              <Legend><Label $size={25.500} $weight={700} $track={-0.55}>Enter your Email</Label></Legend>
              <FieldLabel><Label $size={12.500} $weight={700} $track={-0.1}>Email</Label></FieldLabel>
              <InputGroup>
                <Addon>
                  <svg width="18" height="19" viewBox="0 0 18 19" fill="#555"><path d="M9 0c3.500 0 5 2 5 5.500 0 2-1 4-2.500 5.500v1.500c0 1 5 2 6.500 4V19H0v-2.500c1.500-2 6.500-3 6.500-4V11C5 9.500 4 7.500 4 5.500 4 2 5.500 0 9 0z" /></svg>
                </Addon>
                <InputText><Label $size={17.500} $track={-0.7}>Email..</Label></InputText>
              </InputGroup>
              <Alert />
              <ContinueButton type="button">
                <svg width="20" height="19" viewBox="0 0 20 19" fill="#fff"><path d="M19.500 0L19 16.500l-6.500-2.500L7.500 18.500 7 13.500 0 12.500zM17 3.500L8.500 13l-.3 3 1.800-3z" fillRule="evenodd" /></svg>
                <ContinueText $size={17.500}>Continue</ContinueText>
              </ContinueButton>
            </FormWell>
          </ModalBody>
        </Modal>
      </Viewport>

      <Taskbar>
        <StartButton>
          <svg width="20" height="20" viewBox="0 0 20 20" fill="#fff"><path d="M0 2.800L8.200 1.700v7.800H0zM9.200 1.500L20 0v9.500H9.200zM0 10.500h8.200v7.800L0 17.200zM9.200 10.500H20V20L9.200 18.500z" /></svg>
        </StartButton>
        <TaskSearch>
          <svg width="21" height="21" fill="none" stroke="#e8e8e8" strokeWidth="1.600"><circle cx="13" cy="8" r="6.800" /><path d="M8.500 13L1 20.500" /></svg>
          <Label $size={18.500} $track={-0.33}>Type here to search</Label>
        </TaskSearch>
        {Object.entries(taskIcons).map(([name, icon]) => {
          const Item = running[name] ? RunningItem : TaskItem;
          return <Item key={name} $active={name === "firefox"}>{icon}</Item>;
        })}
        <Tray>
          <svg width="17" height="10" fill="none" stroke="#fff" strokeWidth="1.400"><path d="M1 9l7.500-7.500L16 9" /></svg>
          <ToolSlot $w={60}><Label $size={15} $track={-0.4}>ENG</Label></ToolSlot>
          <Clock>
            <Label $size={15} $track={-0.4}>00:58</Label>
            <Label $size={15} $track={-0.4}>16-02-2020</Label>
          </Clock>
          <svg width="45" height="50" viewBox="0 0 45 50">
            <path fill="#fff" d="M0 15h20v16h-8l-2 3-2-3H0z" /><path d="M4 20h12M4 24h12M4 28h8" stroke="#22241f" strokeWidth="1.500" />
            <circle cx="20" cy="34.500" r="10" fill="#32342f" stroke="#8b8c88" /><text x="20" y="40" fontSize="15" textAnchor="middle" fill="#fff">1</text>
          </svg>
          <ShowDesktop />
        </Tray>
      </Taskbar>
    </Desktop>
  );
}
